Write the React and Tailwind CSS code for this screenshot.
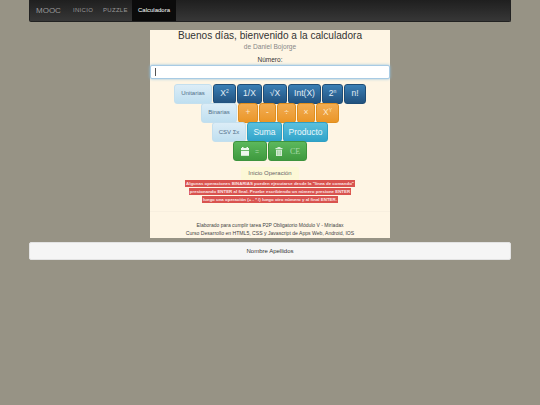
import React from "react";

const blue = "bg-gradient-to-b from-[#3a7fb5] to-[#22527f] border-[#1f4d76] text-[#e4edf5]";
const orange = "bg-gradient-to-b from-[#f3ad51] to-[#ea9626] border-[#e08e1e] text-[#fbe6c8]";
const cyan = "bg-gradient-to-b from-[#5bc0de] to-[#2fa4c9] border-[#2f9fc4] text-[#eaf7fb]";
const green = "bg-gradient-to-b from-[#5cb85c] to-[#3f9a3f] border-[#3d933d] text-[#a9d9a9]";
const pale = "bg-gradient-to-b from-[#dcedf7] to-[#bfdff0] border-[#c4dfee] text-[#52708a]";

const rows = [
  [
    { label: "Unitarias", w: "w-[38px]", color: pale, small: true },
    { label: <>X<sup className="text-[5px]">2</sup></>, w: "w-[23px]", color: blue },
    { label: "1/X", w: "w-[25px]", color: blue },
    { label: "√X", w: "w-[24px]", color: blue },
    { label: "Int(X)", w: "w-[33px]", color: blue },
    { label: <>2<sup className="text-[5px]">n</sup></>, w: "w-[21px]", color: blue },
    { label: "n!", w: "w-[22px]", color: blue },
  ],
  [
    { label: "Binarias", w: "w-[36px]", color: pale, small: true },
    { label: "+", w: "w-[20px]", color: orange },
    { label: "-", w: "w-[17px]", color: orange },
    { label: "÷", w: "w-[19px]", color: orange },
    { label: "×", w: "w-[18px]", color: orange },
    { label: <>X<sup className="text-[5px]">Y</sup></>, w: "w-[23px]", color: orange },
  ],
  [
    { label: "CSV Σx", w: "w-[34px]", color: pale, small: true },
    { label: "Suma", w: "w-[35px]", color: cyan },
    { label: "Producto", w: "w-[45px]", color: cyan },
  ],
];

const CalendarIcon = () => (
  <svg width="8" height="9" viewBox="0 0 8 9" fill="#eef8ee">
    <rect x="1" y="0" width="1.5" height="1.5" />
    <rect x="5.5" y="0" width="1.5" height="1.5" />
    <rect x="0" y="1" width="8" height="2" />
    <rect x="0" y="3.8" width="8" height="5" />
  </svg>
);

const TrashIcon = () => (
  <svg width="8" height="9" viewBox="0 0 8 9" fill="#d5ecd5">
    <rect x="2.5" y="0" width="3" height="1" />
    <rect x="0.5" y="1" width="7" height="1.2" />
    <path d="M1 2.8h6v6.2H1z" />
    <path d="M2.6 3.6h.6v4.6h-.6zM4.8 3.6h.6v4.6h-.6z" fill="#6fb56f" />
  </svg>
);

const Btn = ({ w, color, small, children }) => (
  <button
    className={`${w} ${color} h-[20px] border rounded-[3px] flex items-center justify-center whitespace-nowrap ${small ? "text-[6px]" : "text-[8.5px]"}`}
  >
    {children}
  </button>
);

export default function App() {
  return (
    <div
      className="w-[540px] h-[405px] bg-[#979385] overflow-hidden text-[#333]"
      style={{ fontFamily: '"Liberation Sans", Arial, sans-serif' }}
    >
      <div className="mx-[29px] h-[22px] flex items-stretch rounded-b-[2px] bg-gradient-to-b from-[#1f1f1f] to-[#373737] border border-t-0 border-[#222]">
        <div className="w-[36px] pl-[6px] flex items-center text-[8px] text-[#999]">MOOC</div>
        <div className="w-[31px] pl-[7px] flex items-center text-[6px] tracking-[0.3px] text-[#999]">INICIO</div>
        <div className="w-[35px] pl-[6px] flex items-center text-[6px] tracking-[0.3px] text-[#999]">PUZZLE</div>
        <div className="w-[44px] flex items-center justify-center text-[6px] text-white bg-[#0b0b0b]">Calculadora</div>
      </div>

      <div className="mt-[8px] mx-auto w-[240px] h-[208px] bg-[#fef5e4] flex flex-col items-center">
        <h1 className="text-[10.1px] leading-[11px] h-[11px] text-[#333] whitespace-nowrap">Buenos días, bienvenido a la calculadora</h1>
        <div className="text-[6.6px] text-[#888] mt-[2px] leading-[8px]">de Daniel Bojorge</div>
        <div className="text-[6.5px] mt-[5px] leading-[8px]">Número:</div>
        <div className="mt-[1px] w-full h-[14px] bg-white border border-[#a8cbe4] rounded-[2px] shadow-[0_0_3px_#8fc1e3] flex items-center pl-[4px]">
          <div className="w-px h-[8px] bg-[#555]"></div>
        </div>
        <div className="mt-[4.5px] flex flex-col items-center w-full">
          {rows.map((row, i) => (
            <div key={i} className="flex justify-center gap-[1px] h-[19.3px]">
              {row.map((b, j) => (
                <Btn key={j} w={b.w} color={b.color} small={b.small}>{b.label}</Btn>
              ))}
            </div>
          ))}
          <div className="flex justify-center gap-[1px]">
            <button className={`${green} w-[34px] h-[20px] border rounded-[3px] flex items-center justify-center gap-[6px] text-[7px]`}>
              <CalendarIcon />
              <span className="mt-[2px]">=</span>
            </button>
            <button className={`${green} w-[39px] h-[20px] border rounded-[3px] flex items-center justify-center gap-[7px] text-[8px]`}>
              <TrashIcon />
              <span className="mt-[2px]" style={{ fontFamily: '"Liberation Serif", serif' }}>CE</span>
            </button>
          </div>
        </div>
        <div className="mt-[5.5px] w-[58px] h-[13px] bg-[#fcf8d6] rounded-t-[2px] flex items-center justify-center text-[6px] text-[#666]">
          Inicio Operación
        </div>
        <div className="flex flex-col items-center text-[4.4px] font-bold text-[#fbe3e3] leading-[7px]">
          <span className="bg-[#d9534f] px-[1px] h-[7px] whitespace-nowrap">Algunas operaciones BINARIAS pueden ejecutarse desde la "línea de comando"</span>
          <span className="bg-[#d9534f] px-[1px] mt-[1px] h-[7px] whitespace-nowrap">presionando ENTER al final. Pruebe escribiendo un número presione ENTER</span>
          <span className="bg-[#d9534f] px-[1px] mt-[1.5px] h-[7px] whitespace-nowrap">luego una operación (+ - * /) luego otro número y al final ENTER.</span>
        </div>
        <div className="mt-[8px] w-full border-t border-[#f8efdf]"></div>
        <div className="mt-[9px] text-[5px] text-[#444] leading-[8px] whitespace-nowrap">Elaborado para cumplir tarea P2P Obligatorio Módulo V - Miríadax</div>
        <div className="text-[5.1px] text-[#444] leading-[8px] whitespace-nowrap">Curso Desarrollo en HTML5, CSS y Javascript de Apps Web, Android, IOS</div>
      </div>

      <div className="mt-[4px] mx-[29px] h-[18px] bg-[#f5f5f5] border border-[#e3e3e3] rounded-[2px] flex items-center justify-center text-[6px] text-[#333]">
        Nombre Apellidos
      </div>
    </div>
  );
}
